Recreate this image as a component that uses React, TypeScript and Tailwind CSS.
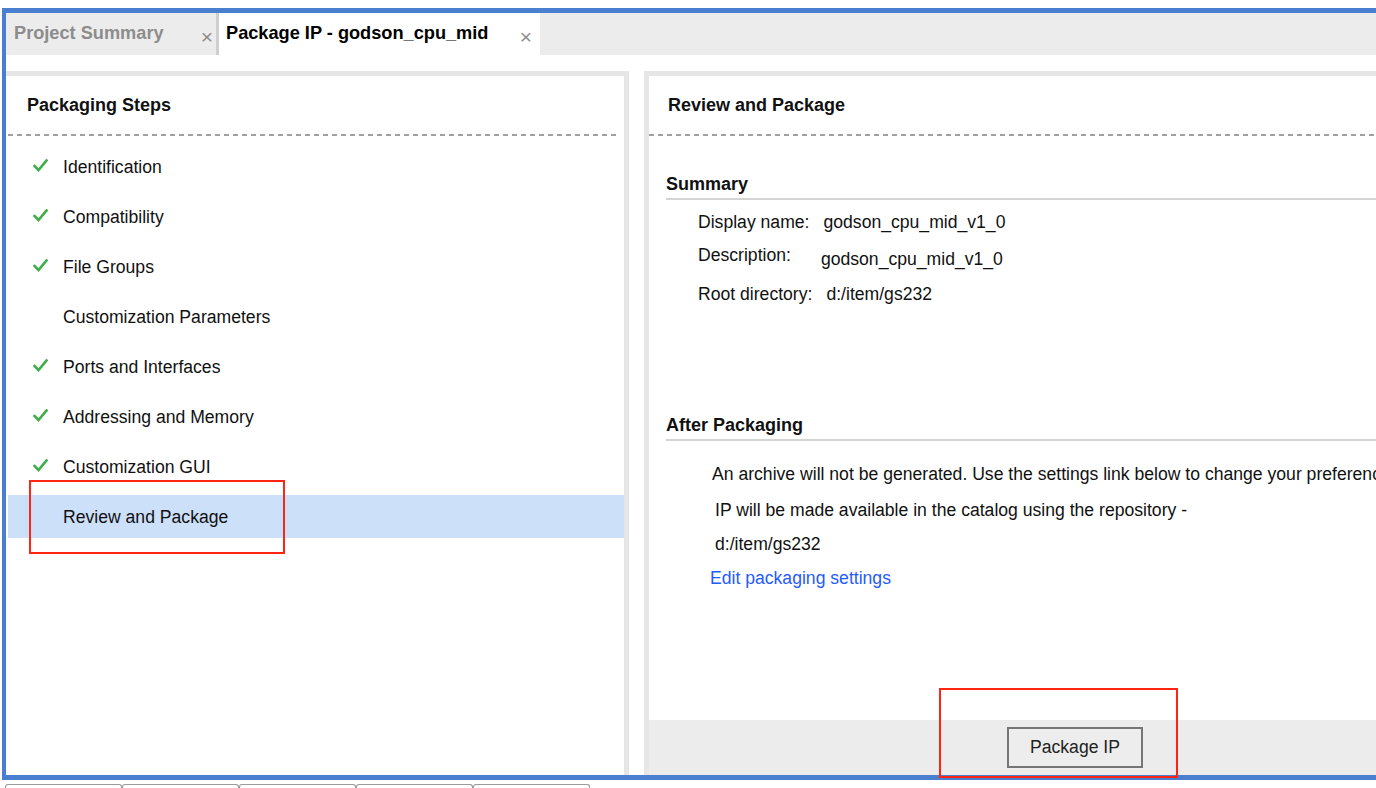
import React from 'react'

const STEPS: { label: string; done: boolean }[] = [
  { label: 'Identification', done: true },
  { label: 'Compatibility', done: true },
  { label: 'File Groups', done: true },
  { label: 'Customization Parameters', done: false },
  { label: 'Ports and Interfaces', done: true },
  { label: 'Addressing and Memory', done: true },
  { label: 'Customization GUI', done: true },
  { label: 'Review and Package', done: false },
]

const SELECTED = 'Review and Package'

function Check() {
  return (
    <svg width="15" height="13" viewBox="0 0 15 13" className="shrink-0">
      <path d="M1.5 7 L5.5 11 L13.5 1.5" fill="none" stroke="#3fae4a" strokeWidth="2.6" strokeLinecap="square" />
    </svg>
  )
}

function Dashed() {
  return (
    <div className="h-[2px] bg-[repeating-linear-gradient(to_right,#a0a0a0_0_5px,transparent_5px_9px)]" />
  )
}

export default function App() {
  return (
    <div className="relative h-[788px] w-[1376px] overflow-hidden bg-white pt-[8px] font-['Liberation_Sans',Arial,sans-serif] text-[17.6px] text-[#111]">
      {/* main frame */}
      <div className="ml-[2px] flex h-[772px] flex-col border-y-[5px] border-l-4 border-[#4a7fd0]">
        {/* tabs */}
        <div className="flex h-[42px] shrink-0 bg-[#ececec]">
          <div className="flex w-[210px] items-center pl-[8px] font-bold text-[#8c8c8c]">
            <span className="text-[18.2px]">Project Summary</span>
            <span className="ml-auto mr-[3px] mt-[4px] text-[21px] font-normal leading-none text-[#8c8c8c]">×</span>
          </div>
          <div className="w-[3px] bg-[#cfcfcf]" />
          <div className="flex w-[321px] items-center bg-white pl-[7px] font-bold text-black">
            <span className="text-[18.2px]">Package IP - godson_cpu_mid</span>
            <span className="ml-auto mr-[8px] mt-[4px] text-[21px] font-normal leading-none text-[#8c8c8c]">×</span>
          </div>
        </div>

        {/* panels */}
        <div className="flex min-h-0 flex-1 pt-[16px]">
          {/* left panel */}
          <div className="flex w-[623px] flex-col border-r-[5px] border-t-[5px] border-[#e6e6e6]">
            <div className="flex h-[58px] items-center pl-[21px] text-[18px] font-bold">Packaging Steps</div>
            <div className="ml-[2px] mr-[4px]">
              <Dashed />
            </div>
            <div className="flex flex-col gap-[7px] pt-[9px]">
              {STEPS.map((s) => (
                <div
                  key={s.label}
                  className={`ml-[2px] flex h-[43px] items-center pl-[25px] pt-[2px] ${s.label === SELECTED ? 'bg-[#cce0fa]' : ''}`}
                >
                  <div className="mb-[5px] w-[30px]">{s.done && <Check />}</div>
                  <span>{s.label}</span>
                </div>
              ))}
            </div>
          </div>

          {/* right panel */}
          <div className="ml-[15px] flex min-w-0 flex-1 flex-col border-l-[5px] border-t-[5px] border-[#e6e6e6]">
            <div className="flex h-[58px] items-center pl-[19px] text-[18px] font-bold">Review and Package</div>
            <Dashed />

            <div className="flex-1 overflow-hidden pl-[17px]">
              <div className="mt-[37px] text-[18px] font-bold leading-[22px]">Summary</div>
              <div className="mt-[3px] h-[2px] bg-[#d4d4d4]" />
              <div className="pl-[32px]">
                <div className="mt-[12px] flex h-[20px] items-center whitespace-nowrap">
                  <span>Display name:</span>
                  <span className="ml-[14px]">godson_cpu_mid_v1_0</span>
                </div>
                <div className="mt-[13px] flex h-[24px] whitespace-nowrap">
                  <span className="self-start leading-[20px]">Description:</span>
                  <span className="ml-[30px] self-end leading-[20px]">godson_cpu_mid_v1_0</span>
                </div>
                <div className="mt-[15px] flex h-[20px] items-center whitespace-nowrap">
                  <span>Root directory:</span>
                  <span className="ml-[14px]">d:/item/gs232</span>
                </div>
              </div>

              <div className="mt-[110px] text-[18px] font-bold leading-[22px]">After Packaging</div>
              <div className="mt-[3px] h-[2px] bg-[#d4d4d4]" />
              <div className="whitespace-nowrap pl-[46px]">
                <div className="mt-[23px] h-[20px] leading-[20px]">
                  An archive will not be generated. Use the settings link below to change your preferences.
                </div>
                <div className="mt-[16px] h-[20px] pl-[3px] leading-[20px]">
                  IP will be made available in the catalog using the repository -
                </div>
                <div className="mt-[14px] h-[20px] pl-[3px] leading-[20px]">d:/item/gs232</div>
                <div className="mt-[14px] h-[20px] leading-[20px] text-[#1f5bff]">
                  <span className="-ml-[2px]">Edit packaging settings</span>
                </div>
              </div>
            </div>

            {/* footer */}
            <div className="flex h-[55px] shrink-0 items-start bg-[#ececec] pt-[7px]">
              <button className="ml-[358px] h-[41px] w-[136px] border-2 border-[#767676] bg-[#ededed] text-[17.6px] text-[#222]">
                Package IP
              </button>
            </div>
          </div>
        </div>
      </div>

      {/* bottom tab outlines */}
      <div className="ml-[5px] mt-[4px] flex">
        {[0, 1, 2, 3, 4].map((i) => (
          <div key={i} className="h-[6px] w-[117px] rounded-t-[3px] border-x border-t border-[#9a9a9a]" />
        ))}
      </div>

      {/* annotation boxes */}
      <div className="pointer-events-none absolute left-[29px] top-[480px] h-[74px] w-[256px] border-2 border-[#ff2414]" />
      <div className="pointer-events-none absolute left-[939px] top-[688px] h-[90px] w-[239px] border-2 border-[#ff2414]" />
    </div>
  )
}
